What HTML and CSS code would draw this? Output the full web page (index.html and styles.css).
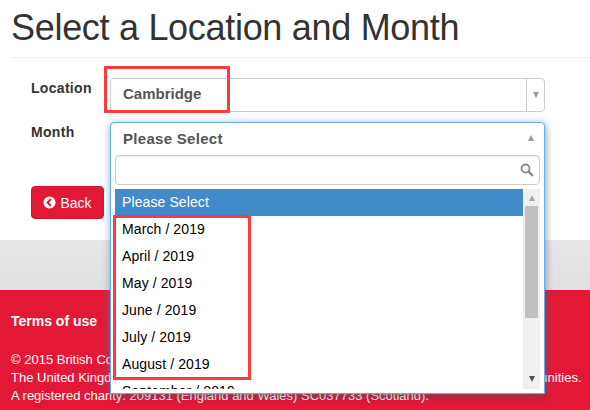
FILE: index.html
```html
<!DOCTYPE html>
<html lang="en">
<head>
<meta charset="utf-8">
<title>Select a Location and Month</title>
<link rel="stylesheet" href="styles.css">
</head>
<body>
<main class="page">
  <h1 class="title">Select a Location and Month</h1>
  <form class="form">
    <div class="row">
      <label class="label">Location</label>
      <div class="select">
        <span class="select-text">Cambridge</span>
        <span class="select-arrow"><i class="tri down"></i></span>
      </div>
    </div>
    <div class="row row-month">
      <label class="label">Month</label>
    </div>
    <div class="actions">
      <button class="btn" type="button">
        <svg class="btn-icon" viewBox="0 0 14 14" width="14" height="14"><circle cx="7" cy="7" r="6.5" fill="#fff"/><path d="M8.4 3.4 5 7l3.4 3.6" fill="none" stroke="#e31837" stroke-width="2.2"/></svg>
        Back
      </button>
    </div>
  </form>
  <div class="band"></div>
  <footer class="footer">
    <p class="terms">Terms of use</p>
    <p class="legal">© 2015 British Council<br>The United Kingdom's international organisation for cultural relations and educational opportunities.<br>A registered charity: 209131 (England and Wales) SC037733 (Scotland).</p>
  </footer>
</main>

<div class="dropdown">
  <div class="dropdown-head"><span>Please Select</span><i class="tri up"></i></div>
  <div class="search">
    <svg class="search-icon" viewBox="0 0 14 14" width="14" height="14"><circle cx="5.5" cy="5.5" r="4" fill="none" stroke="#888" stroke-width="1.8"/><path d="M8.6 8.6 13 13" stroke="#888" stroke-width="2.2"/></svg>
  </div>
  <div class="list-wrap">
    <ul class="list">
      <li class="active">Please Select</li>
      <li>March / 2019</li>
      <li>April / 2019</li>
      <li>May / 2019</li>
      <li>June / 2019</li>
      <li>July / 2019</li>
      <li>August / 2019</li>
      <li>September / 2019</li>
    </ul>
    <div class="scrollbar">
      <i class="tri up small"></i>
      <div class="thumb"></div>
      <i class="tri down small dark"></i>
    </div>
  </div>
</div>

<div class="mark mark-location"></div>
<div class="mark mark-months"></div>
</body>
</html>
```
FILE: styles.css
```css
* { box-sizing: border-box; }
html, body { margin: 0; padding: 0; }
body {
  width: 590px;
  height: 410px;
  overflow: hidden;
  position: relative;
  background: #fff;
  font-family: "Liberation Sans", Arial, sans-serif;
  font-size: 14px;
  color: #333;
}
.page { display: flex; flex-direction: column; height: 410px; }
.title {
  margin: 0 0 0 11px;
  height: 57px;
  padding-top: 8px;
  font-size: 36px;
  line-height: 40px;
  font-weight: 400;
  letter-spacing: -0.3px;
  color: #333;
}
.form {
  margin-left: 11px;
  border-top: 1px solid #eee;
  padding: 20px 0 0 20px;
  height: 183px;
}
.row { display: flex; }
.label { width: 79px; font-weight: 700; font-size: 14px; line-height: 20px; letter-spacing: .3px; }
.select {
  width: 435px;
  height: 34px;
  border: 1px solid #ccc;
  border-radius: 4px;
  display: flex;
  align-items: center;
  justify-content: space-between;
  font-weight: 700;
  color: #555;
  font-size: 15px;
  line-height: 20px;
  padding-bottom: 2px;
}
.select-text { padding-left: 12px; }
.select-arrow {
  width: 18px;
  height: 32px;
  margin-bottom: -2px;
  border-left: 1px solid #ccc;
  display: flex;
  align-items: center;
  justify-content: center;
}
.row-month { margin-top: 10px; }
.actions { margin-top: 44px; }
.btn {
  width: 73px;
  height: 33px;
  background: #e31837;
  border: 1px solid #d01530;
  border-radius: 4px;
  color: #fff;
  font: 14px "Liberation Sans", Arial, sans-serif;
  display: flex;
  align-items: center;
  justify-content: center;
  gap: 4px;
  padding: 0;
}
.btn-icon { width: 13px; height: 13px; }
.band {
  height: 50px;
  background: linear-gradient(#e6e6e6, #e0e0e0);
}
.footer {
  flex: 1;
  background: #e31837;
  color: #fff;
  padding: 22px 11px 0;
  font-size: 13px;
  line-height: 18px;
}
.terms { margin: 0 0 21px; font-weight: 700; font-size: 14px; line-height: 18px; }
.legal { margin: 0; white-space: nowrap; }
.tri { display: block; width: 0; height: 0; border-left: 3.5px solid transparent; border-right: 3.5px solid transparent; }
.tri.down { border-top: 6px solid #999; }
.tri.up { border-bottom: 6px solid #999; }
.tri.small.up { border-bottom-color: #a6a6a6; }
.tri.small.dark { border-top-color: #505050; }
.dropdown {
  position: absolute;
  left: 110px;
  top: 122px;
  width: 435px;
  height: 272px;
  background: #fff;
  border: 1px solid #66afe9;
  border-radius: 4px 4px 0 0;
  box-shadow: 0 0 8px rgba(102, 175, 233, .5), 1px 3px 6px rgba(0, 0, 0, .3);
  padding: 0 4px 4px;
  display: flex;
  flex-direction: column;
}
.dropdown-head {
  height: 32px;
  flex: none;
  display: flex;
  align-items: center;
  justify-content: space-between;
  padding: 0 6px 2px 8px;
  font-size: 15px;
  font-weight: 700;
  letter-spacing: .3px;
  color: #555;
}
.search {
  height: 30px;
  flex: none;
  border: 1px solid #ccc;
  border-radius: 4px;
  box-shadow: inset 0 1px 1px rgba(0, 0, 0, .075);
  display: flex;
  align-items: center;
  justify-content: flex-end;
  padding-right: 5px;
}
.list-wrap { display: flex; margin-top: 4px; flex: 1; min-height: 0; overflow: hidden; }
.list {
  list-style: none;
  margin: 0;
  padding: 0;
  flex: 1;
  color: #000;
  font-size: 14px;
  letter-spacing: .1px;
}
.list li { height: 27px; line-height: 27px; padding-left: 7px; }
.list li.active { background: #428bca; color: #fff; }
.scrollbar {
  width: 17px;
  background: #f0f0f0;
  display: flex;
  flex-direction: column;
  align-items: center;
  position: relative;
}
.scrollbar .tri.up { margin-top: 6px; }
.thumb {
  position: absolute;
  top: 17px;
  left: 2px;
  width: 13px;
  height: 112px;
  background: #c0c0c0;
}
.scrollbar .tri.down { margin-top: auto; margin-bottom: 7px; }
.mark { position: absolute; border: 3px solid #fb3c3c; }
.mark-location { left: 104px; top: 66px; width: 126px; height: 47px; }
.mark-months { left: 113px; top: 215px; width: 138px; height: 165px; }
```
